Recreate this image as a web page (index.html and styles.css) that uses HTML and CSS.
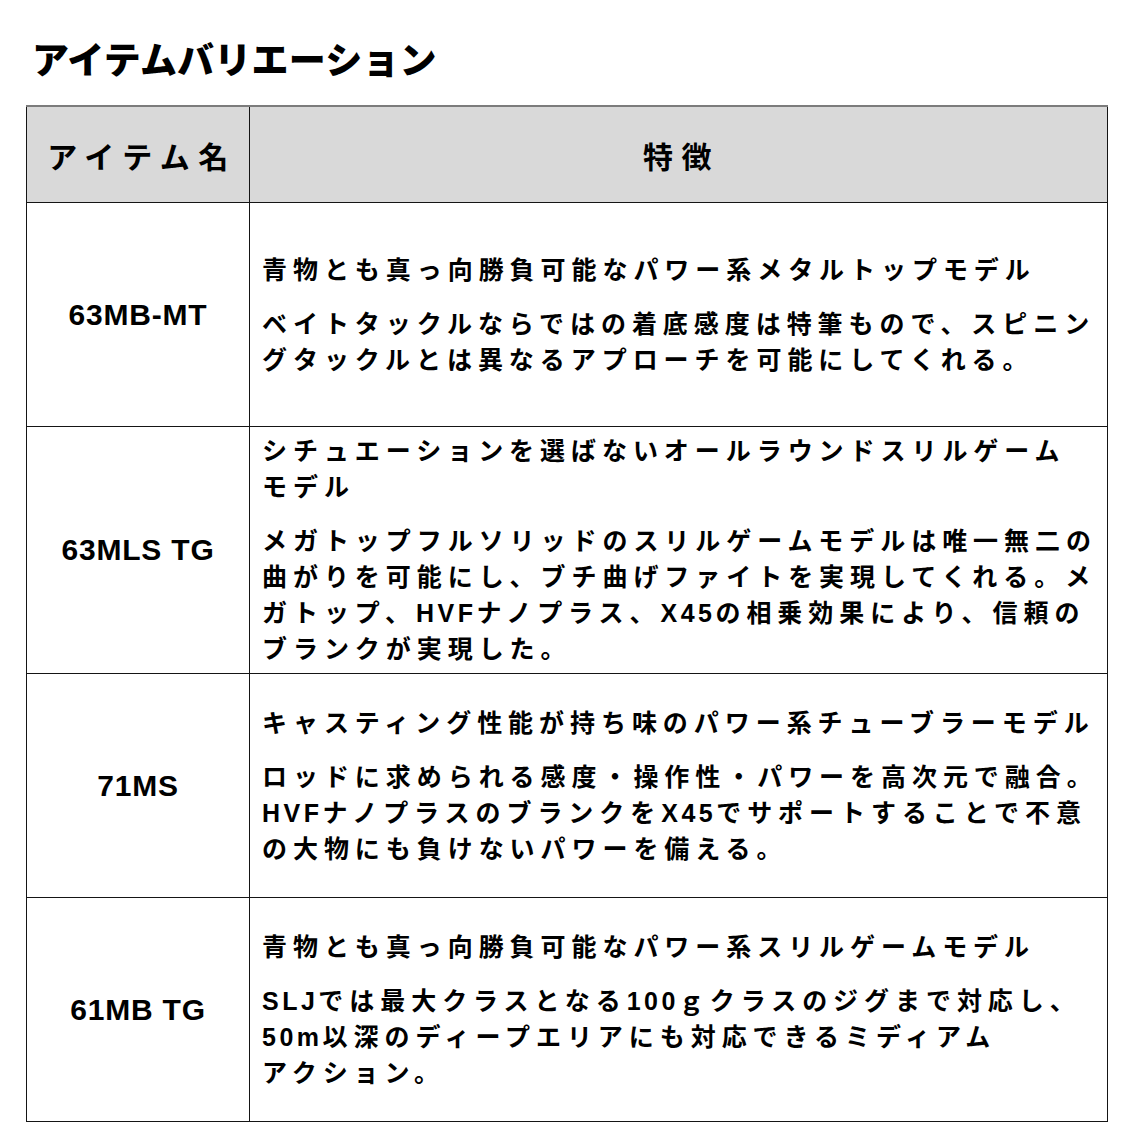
FILE: index.html
```html
<!DOCTYPE html>
<html lang="ja">
<head>
<meta charset="utf-8">
<title>アイテムバリエーション</title>
<link rel="stylesheet" href="styles.css">
</head>
<body>
<div class="page">
  <h1 class="title">アイテムバリエーション</h1>
  <table class="items">
    <colgroup>
      <col class="c-name">
      <col class="c-desc">
    </colgroup>
    <thead>
      <tr>
        <th class="col-name">アイテム名</th>
        <th class="col-desc">特徴</th>
      </tr>
    </thead>
    <tbody>
      <tr>
        <td class="name">63MB-MT</td>
        <td class="desc">
          <p>青物とも真っ向勝負可能なパワー系メタルトップモデル</p>
          <p>ベイトタックルならではの着底感度は特筆もので、スピニン<br>グタックルとは異なるアプローチを可能にしてくれる。</p>
        </td>
      </tr>
      <tr>
        <td class="name">63MLS TG</td>
        <td class="desc">
          <p>シチュエーションを選ばないオールラウンドスリルゲーム<br>モデル</p>
          <p>メガトップフルソリッドのスリルゲームモデルは唯一無二の<br>曲がりを可能にし、ブチ曲げファイトを実現してくれる。メ<br>ガトップ、<span class="en">HVF</span>ナノプラス、<span class="en">X45</span>の相乗効果により、信頼の<br>ブランクが実現した。</p>
        </td>
      </tr>
      <tr>
        <td class="name">71MS</td>
        <td class="desc">
          <p>キャスティング性能が持ち味のパワー系チューブラーモデル</p>
          <p>ロッドに求められる感度・操作性・パワーを高次元で融合。<br><span class="en">HVF</span>ナノプラスのブランクを<span class="en">X45</span>でサポートすることで不意<br>の大物にも負けないパワーを備える。</p>
        </td>
      </tr>
      <tr>
        <td class="name">61MB TG</td>
        <td class="desc">
          <p>青物とも真っ向勝負可能なパワー系スリルゲームモデル</p>
          <p><span class="en">SLJ</span>では最大クラスとなる<span class="en">100</span>ｇクラスのジグまで対応し、<br><span class="en">50m</span>以深のディープエリアにも対応できるミディアム<br>アクション。</p>
        </td>
      </tr>
    </tbody>
  </table>
</div>
</body>
</html>
```

FILE: styles.css
```css
html, body {
  margin: 0;
  padding: 0;
  background: #ffffff;
}

body {
  color: #000000;
  font-family: "Liberation Sans", "Noto Sans CJK JP", sans-serif;
}

.page {
  padding: 36px 0 0 26px;
}

.title {
  margin: 0 0 25px 6px;
  font-family: "Noto Sans CJK JP", sans-serif;
  font-size: 37px;
  line-height: 44px;
  font-weight: 900;
  letter-spacing: 0.2px;
}

.items {
  border-collapse: collapse;
  table-layout: fixed;
  width: 1082px;
}

.c-name {
  width: 223px;
}

.items th,
.items td {
  border: 1px solid #151515;
  padding: 0;
}

.items thead th {
  background: #d9d9d9;
  border-top: 2px solid #7c7c7c;
  height: 95px;
  font-family: "Noto Sans CJK JP", sans-serif;
  font-size: 30px;
  font-weight: 700;
  letter-spacing: 8.5px;
  text-align: center;
  vertical-align: middle;
}

.items thead .col-name {
  padding-left: 8px;
}

.items thead .col-desc {
  padding-left: 6px;
}

.items tbody tr {
  height: 224px;
}

.name {
  text-align: center;
  vertical-align: middle;
  font-size: 30px;
  font-weight: 700;
  letter-spacing: 0.8px;
}

.desc {
  vertical-align: middle;
  padding: 6px 0 6px 12px !important;
  font-size: 25px;
  line-height: 36px;
  font-weight: 700;
  letter-spacing: 5.95px;
  white-space: nowrap;
}

.desc p {
  margin: 0;
}

.desc p + p {
  margin-top: 18px;
}

.en {
  letter-spacing: 3.5px;
}
```
